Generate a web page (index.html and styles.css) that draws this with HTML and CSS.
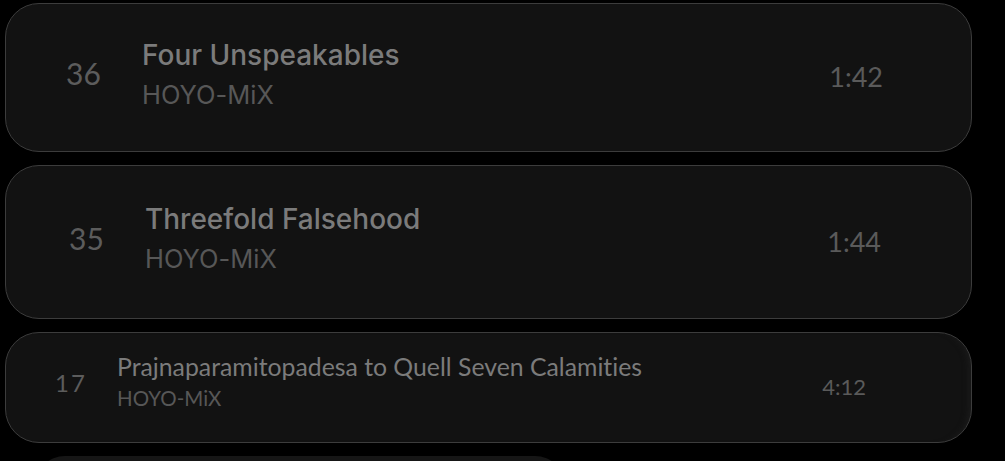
FILE: index.html
```html
<!DOCTYPE html>
<html>
<head>
<meta charset="utf-8">
<link rel="stylesheet" href="styles.css">
</head>
<body>
<div class="list">
  <div class="card card-a">
    <div class="num">36</div>
    <div class="info">
      <div class="title">Four Unspeakables</div>
      <div class="artist">HOYO-MiX</div>
    </div>
    <div class="time">1:42</div>
  </div>
  <div class="card card-b">
    <div class="num">35</div>
    <div class="info">
      <div class="title">Threefold Falsehood</div>
      <div class="artist">HOYO-MiX</div>
    </div>
    <div class="time">1:44</div>
  </div>
  <div class="card card-c">
    <div class="num">17</div>
    <div class="info">
      <div class="title">Prajnaparamitopadesa to Quell Seven Calamities</div>
      <div class="artist">HOYO-MiX</div>
    </div>
    <div class="time">4:12</div>
  </div>
  <div class="card card-d"></div>
</div>
</body>
</html>
```
FILE: styles.css
```css
html, body {
  margin: 0;
  padding: 0;
  background: #000;
  height: 461px;
  overflow: hidden;
}
.list {
  display: flex;
  flex-direction: column;
  gap: 13px;
  padding: 3px 0 0 5px;
  height: 458px;
  overflow: hidden;
}
.card {
  box-sizing: border-box;
  width: 967px;
  flex-shrink: 0;
  background: #121212;
  border: 1px solid #3c3c3c;
  border-radius: 34px;
  display: flex;
  align-items: center;
  font-variant-ligatures: none;
}
.num {
  font-family: "Lato", sans-serif;
  color: #5c5c5c;
}
.info {
  display: flex;
  flex-direction: column;
  flex: 1;
}
.title {
  font-family: "Inter", sans-serif;
  color: #7b7b7b;
  font-weight: 500;
}
.artist {
  font-family: "Inter", sans-serif;
  color: #575757;
}
.time {
  font-family: "Lato", sans-serif;
  color: #5a5a5a;
}
.card-a {
  height: 149px;
}
.card-a .num {
  width: 76px;
  padding-left: 60px;
  font-size: 30px;
  margin-top: -10px;
}
.card-a .title { font-size: 28px; line-height: 38px; margin-top: -3px; }
.card-a .artist { font-size: 25.5px; line-height: 42px; }
.card-a .time { font-size: 27px; padding-right: 88px; margin-top: -3px; }

.card-b {
  height: 154px;
}
.card-b .num {
  width: 76px;
  padding-left: 63px;
  font-size: 30px;
  margin-top: -8px;
}
.card-b .title { font-size: 28px; line-height: 38px; margin-top: -4px; }
.card-b .artist { font-size: 25.5px; line-height: 42px; }
.card-b .time { font-size: 27px; padding-right: 90px; margin-top: -2px; }

.card-c {
  height: 111px;
  box-shadow: inset -8px 0 6px -6px #1c1c1c;
}
.card-c .num {
  width: 62px;
  padding-left: 49px;
  font-size: 24px;
  letter-spacing: 2px;
  margin-top: -10px;
}
.card-c .title { font-family: "Lato", sans-serif; font-weight: 400; font-size: 24.8px; line-height: 30px; margin-top: -10px; }
.card-c .artist { font-family: "Lato", sans-serif; font-size: 20.5px; line-height: 32px; }
.card-c .time { font-size: 22px; padding-right: 105px; margin-top: -2px; }

.card-d {
  width: 530px;
  margin-left: 30px;
  height: 60px;
  border: none;
  background: #161616;
}
```
